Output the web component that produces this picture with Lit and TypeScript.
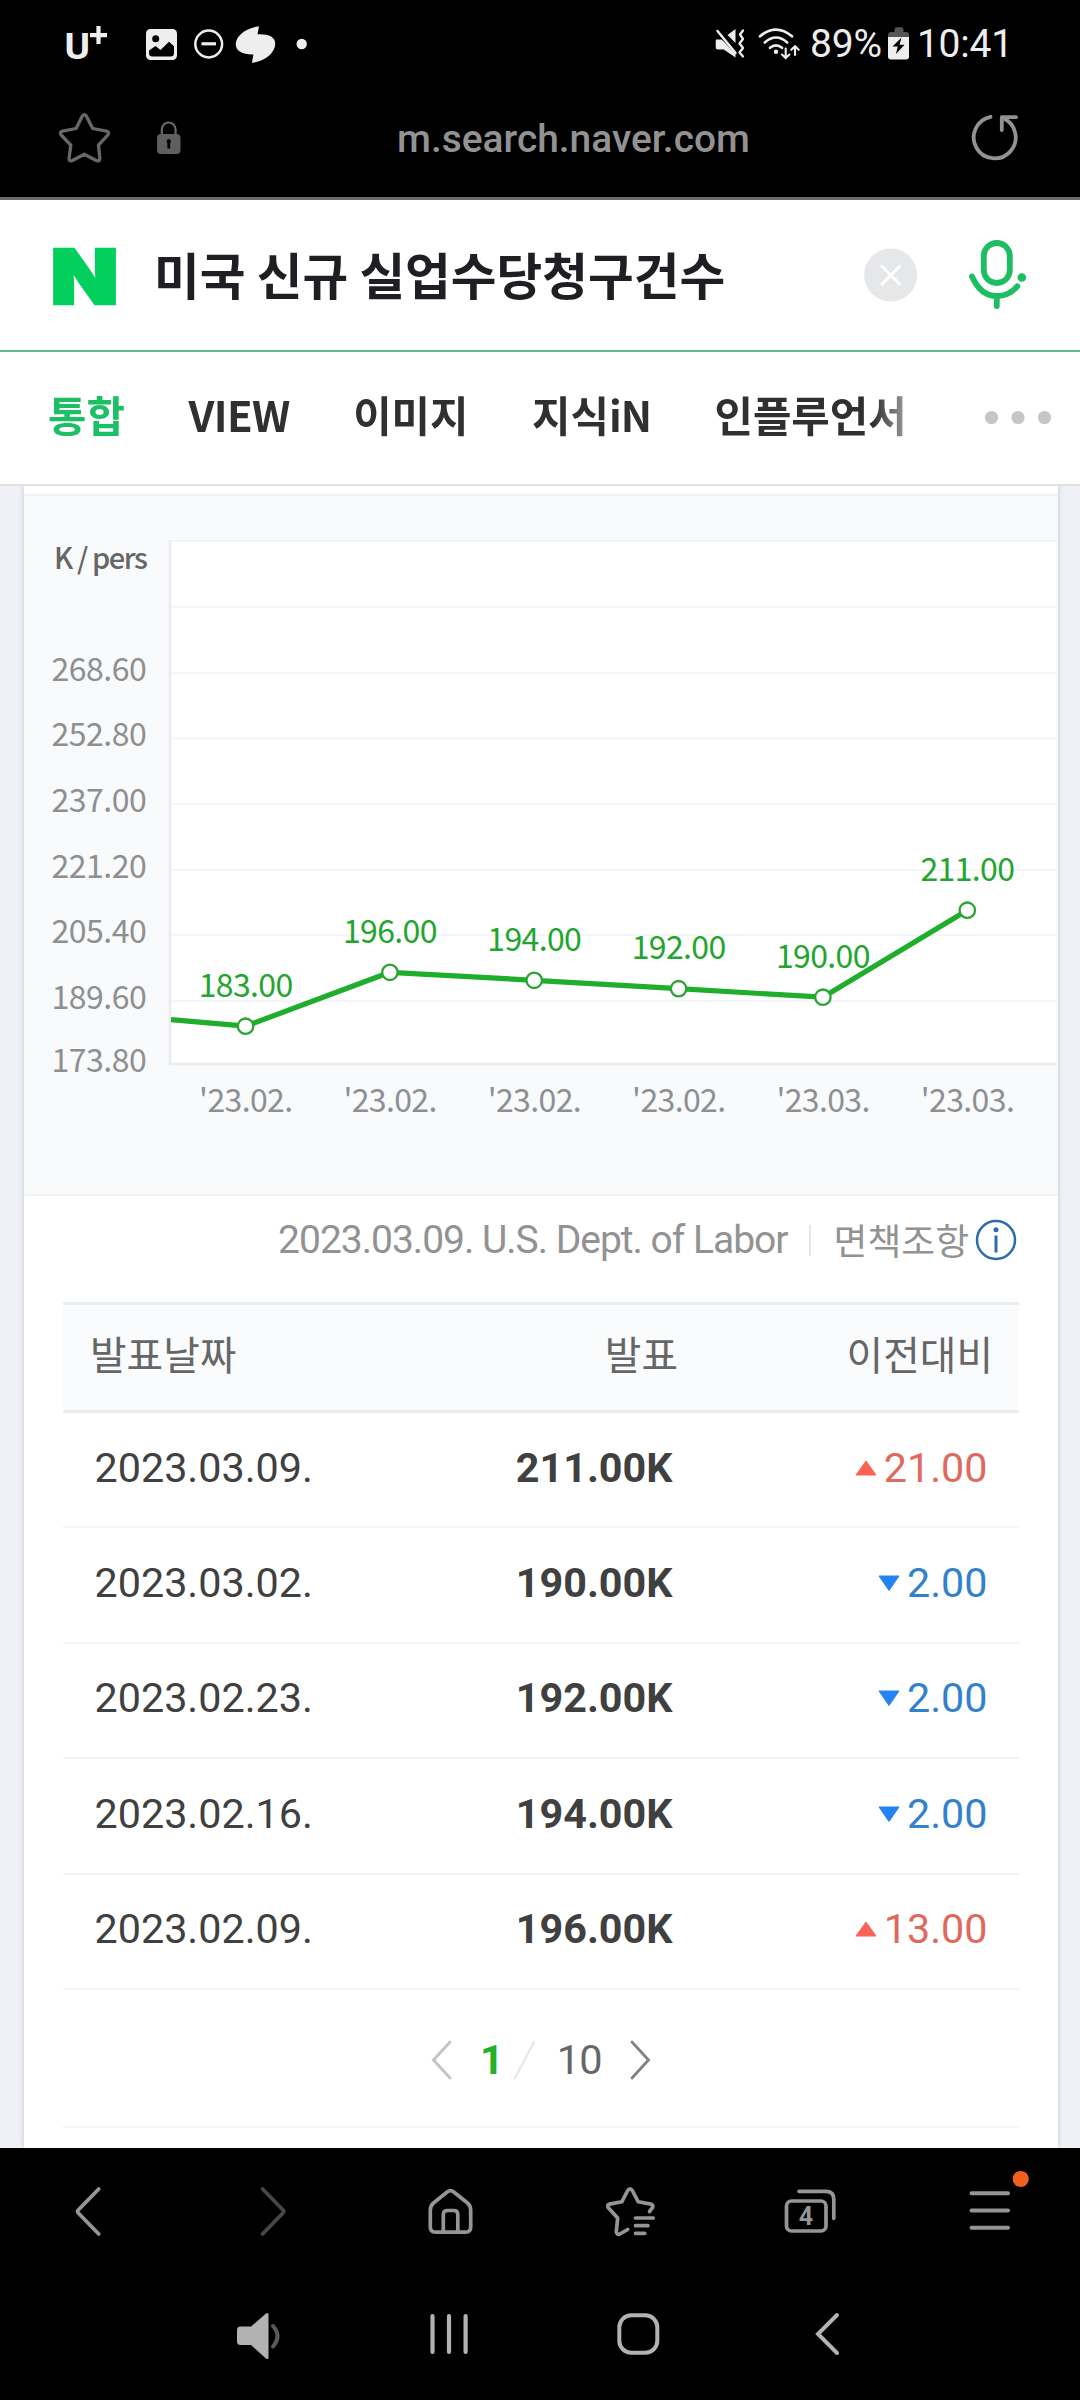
import { LitElement, html, svg, css } from "lit";
import { customElement } from "lit/decorators.js";

@customElement("status-bar")
class StatusBar extends LitElement {
  static styles = css`
    :host { display: flex; align-items: center; height: 88px; background: #000; color: #eee; font: 39px/46px Roboto, sans-serif; }
    svg { display: block; flex: none; }
    .carrier { margin-left: 62px; }
    .picture { margin-left: 26px; }
    .dnd { margin-left: 6px; }
    .app { margin-left: 2px; }
    .more { margin-left: 12px; }
    .right { margin-left: auto; display: flex; align-items: center; padding-right: 67px; white-space: nowrap; }
    .wifi { margin-left: 6px; }
    .percent { width: 84px; padding-left: 8px; letter-spacing: -0.2px; box-sizing: border-box; }
    .clock { width: 101px; letter-spacing: -0.2px; text-align: right; }
  `;
  render() {
    return html`
      <svg class="carrier" width="52" height="64" viewBox="62 12 52 64" fill="#eee" font-family="Roboto, sans-serif">
        <text x="64.5" y="59" font-size="37.5" font-weight="700" textLength="25.5" lengthAdjust="spacingAndGlyphs">U</text>
        <path d="M98.5 26v18M90 35.2h17" stroke="#eee" stroke-width="4.2" />
      </svg>
      <svg class="picture" width="42" height="44" viewBox="140 22 42 44">
        <rect x="146" y="29" width="31" height="31" rx="4.5" fill="#eee" />
        <circle cx="155.7" cy="38.7" r="3.5" />
        <path d="M149 50.500l6.500-4.500 5 4L169 41.800l5 4.400V53a3.500 3.500 0 0 1-3.500 3.500h-18A3.500 3.500 0 0 1 149 53z" />
      </svg>
      <svg class="dnd" width="42" height="44" viewBox="188 22 42 44" fill="none" stroke="#eee">
        <circle cx="208.700" cy="44" r="13.400" stroke-width="2.500" />
        <path d="M201.500 43.800h14.500" stroke-width="3.200" />
      </svg>
      <svg class="app" width="48" height="44" viewBox="232 22 48 44" fill="#eee">
        <path d="M259 26.200C246 28 235.800 35.500 235.800 44.500c0 6.500 7 10.200 17.600 9.900l-1.500 8.500C264.500 61 275.200 53.500 275.200 43.500c0-6.500-6.500-9.700-17.700-9.200z" />
      </svg>
      <svg class="more" width="20" height="44" viewBox="292 22 20 44"><circle cx="301.700" cy="44" r="5.200" fill="#eee" /></svg>
      <div class="right">
        <svg width="36" height="44" viewBox="712 22 36 44" fill="#eee">
          <path d="M716 39.500h5.500l14 11.500v6.500L723.800 49.500H718a2.300 2.300 0 0 1-2.300-2.300v-5.500zM727.500 35l8-6v14z" />
          <path d="M717.500 31l18.500 20" stroke="#000" stroke-width="5" />
          <path d="M717.500 31l18 22" stroke="#eee" stroke-width="2.500" stroke-linecap="round" />
          <path d="M743 30.500l-3 4 3 4.500-3.500 4.500 3.500 4.500-3.500 4.500 3.500 4" fill="none" stroke="#eee" stroke-width="2.300" stroke-linecap="round" stroke-linejoin="round" />
        </svg>
        <svg class="wifi" width="48" height="44" viewBox="754 22 48 44" fill="none" stroke="#eee" stroke-width="2.600" stroke-linecap="round">
          <path d="M760 36.300q16-13.500 32 0M764.800 42.500q11.200-10 22.400 0M770 47.800q6-5 12 0" />
          <circle cx="776" cy="51.800" r="2.200" fill="#eee" stroke="none" />
          <path d="M785.700 48.500v9M782 54.500l3.700 3.500 3.700-3.500M795 55V46.500M791.300 49.800l3.700-3.500 3.700 3.500" stroke-width="2.100" />
        </svg>
        <span class="percent">89%</span>
        <svg width="26" height="44" viewBox="886 22 26 44">
          <path d="M888 37v-2a3 3 0 0 1 3-3h3.500v-2.500q0-2.300 2.300-2.300h4.400q2.300 0 2.300 2.300V32h2.500a3 3 0 0 1 3 3v2z" fill="#555" />
          <path d="M888 37h21v19.500a3 3 0 0 1-3 3h-15a3 3 0 0 1-3-3z" fill="#eee" />
          <path d="M901.500 37.500l-9 9h5.200L896 54l8.500-9.300h-5z" />
        </svg>
        <span class="clock">10:41</span>
      </div>
    `;
  }
}

@customElement("address-bar")
class AddressBar extends LitElement {
  static styles = css`
    :host { display: flex; align-items: center; height: 109px; padding-bottom: 9px; box-sizing: border-box; background: #000; }
    svg { display: block; flex: none; }
    .star { margin-left: 56px; }
    .lock { margin-left: 40px; }
    .url { margin-left: 211px; width: 360px; padding-top: 2px; color: #929292; font: 500 38.900px/56px Roboto, sans-serif; white-space: nowrap; }
    .reload { margin-left: auto; margin-right: 56px; }
  `;
  render() {
    return html`
      <svg class="star" width="56" height="56" viewBox="56 110 56 56" fill="none" stroke="#686868" stroke-width="3.300" stroke-linejoin="round">
        <path d="M82.200 116.200q2.200-3 4.200 0l6.300 12.300 13.800 2.600q3.400.9 1.300 3.900l-9.300 10.200 1.300 13q0 3.600-3.600 2.300l-11.900-6.300-11.900 6.300q-3.400 1.300-3.300-2.300l1.700-13-9.600-10.200q-2.300-3 1.300-3.900l13.600-2.600z" />
      </svg>
      <svg class="lock" width="34" height="56" viewBox="152 110 34 56">
        <path d="M161.800 136v-6.500a6.900 7 0 0 1 13.800 0V136" fill="none" stroke="#686868" stroke-width="2.200" />
        <rect x="157" y="134" width="23.500" height="20" rx="4" fill="#5f5f5f" />
        <path d="M168.800 139a2.200 2.400 0 0 1 1.400 4.200v5.200h-2.800v-5.200a2.200 2.400 0 0 1 1.400-4.200z" />
      </svg>
      <span class="url">m.search.naver.com</span>
      <svg class="reload" width="56" height="56" viewBox="968 110 56 56" fill="none" stroke="#929292" stroke-width="3.800" stroke-linecap="round" stroke-linejoin="round">
        <path d="M990.500 116.800a21 21 0 1 0 13 1.500" />
        <path d="M1001.800 130v-12.800h14.200" />
      </svg>
    `;
  }
}

@customElement("search-header")
class SearchHeader extends LitElement {
  static styles = css`
    :host { display: block; background: #fff; border-top: 3px solid #6b6b6b; border-bottom: 2px solid #e1e2e3; font-family: "Noto Sans CJK KR", sans-serif; }
    svg { display: block; flex: none; }
    .search { display: flex; align-items: center; height: 150px; border-bottom: 2px solid #5fbb8e; }
    .logo { margin-left: 44px; }
    .query { margin-left: 30px; width: 600px; padding-bottom: 4px; color: #1e1e23; font-size: 49.700px; line-height: 72px; font-weight: 700; white-space: nowrap; }
    .clear { margin-left: 107px; }
    .mic { margin-left: 41px; }
    .tabs { display: flex; align-items: center; height: 132px; }
    .list { display: flex; gap: 63.500px; margin-left: 48px; width: 864px; padding-bottom: 9px; color: #303030; font-size: 41.800px; line-height: 62px; font-weight: 700; white-space: nowrap;
      mask-image: linear-gradient(90deg, #000 825px, rgba(0,0,0,.45) 860px); }
    .tab { flex: none; }
    .on { color: #1bc065; }
    .view { letter-spacing: -0.6px; }
    .latin { letter-spacing: -1px; }
    .more { margin-left: 68px; }
  `;
  render() {
    return html`
      <div class="search">
        <svg class="logo" width="80" height="110" viewBox="44 220 80 110">
          <text x="50.500" y="304" font-family="Inter, sans-serif" font-weight="900" font-size="76" textLength="68" lengthAdjust="spacingAndGlyphs" fill="#03cf5d" stroke="#03cf5d" stroke-width="2.600">N</text>
        </svg>
        <span class="query">미국 신규 실업수당청구건수</span>
        <svg class="clear" width="60" height="60" viewBox="861 245 60 60">
          <circle cx="890.600" cy="275" r="26.500" fill="#e6e7e9" />
          <path d="M882 266.500l17.500 17.500M899.500 266.500L882 284" stroke="#fff" stroke-width="3" stroke-linecap="round" />
        </svg>
        <svg class="mic" width="70" height="80" viewBox="962 235 70 80" fill="none" stroke="#1dbe61" stroke-width="5.800" stroke-linecap="round">
          <rect x="983.800" y="243" width="26" height="40" rx="13" />
          <path d="M972 276.500C978 290 986.500 296 996.800 296c8 0 15-3 20.500-9.800M996.800 297v9" />
          <circle cx="1021.800" cy="277.500" r="4.300" fill="#1dbe61" stroke="none" />
        </svg>
      </div>
      <div class="tabs">
        <div class="list">
          <span class="tab on">통합</span><span class="tab view">VIEW</span><span class="tab">이미지</span><span class="tab">지식<span class="latin">iN</span></span><span class="tab">인플루언서</span>
        </div>
        <svg class="more" width="76" height="20" viewBox="980 407 76 20" fill="#c5c6ca">
          <circle cx="991.500" cy="416.500" r="6.600" /><circle cx="1018" cy="416.500" r="6.600" /><circle cx="1044.500" cy="416.500" r="6.600" />
        </svg>
      </div>
    `;
  }
}

interface Point { x: number; y: number; label: string; date: string; }

@customElement("claims-chart")
class ClaimsChart extends LitElement {
  static styles = css`
    :host { display: block; background: #f9fafc; border-top: 2px solid #f1f2f4; border-bottom: 2px solid #f1f2f4; }
    svg { display: block; }
    .t { font-family: "Noto Sans CJK KR", sans-serif; font-size: 32px; }
    .axis { fill: #8e8f90; }
    .unit { fill: #666; font-size: 29px; font-weight: 500; }
    .value { fill: #22a52e; }
  `;
  private points: Point[] = [
    { x: 245.600, y: 1026.200, label: "183.00", date: "'23.02." },
    { x: 389.900, y: 972.300, label: "196.00", date: "'23.02." },
    { x: 534.200, y: 980.300, label: "194.00", date: "'23.02." },
    { x: 678.600, y: 988.700, label: "192.00", date: "'23.02." },
    { x: 822.900, y: 997.200, label: "190.00", date: "'23.03." },
    { x: 967.300, y: 910.200, label: "211.00", date: "'23.03." },
  ];
  private ticks: [string, number][] = [
    ["268.60", 680.500], ["252.80", 746], ["237.00", 812], ["221.20", 877.500], ["205.40", 943], ["189.60", 1009], ["173.80", 1071.500],
  ];
  private grid = [607, 673, 738.500, 804, 870, 935, 1001];
  render() {
    const line = [`171,1019.7`, ...this.points.map((p) => `${p.x},${p.y}`)].join(" ");
    return html`
      <svg width="1034" height="698" viewBox="24 496 1034 698">
        <rect x="171" y="542" width="885" height="521" fill="#fff" />
        <path d="M169 541h887" stroke="#f3f5f6" stroke-width="2" />
        ${this.grid.map((y) => svg`<path d="M171 ${y}h885" stroke="#f4f5f6" stroke-width="2" />`)}
        <path d="M170 540v524" stroke="#eceef1" stroke-width="3" />
        <path d="M169 1064h887" stroke="#e9ecef" stroke-width="2.500" />
        <text class="t unit" x="54" y="568.500" textLength="94">K / pers</text>
        ${this.ticks.map(([t, y]) => svg`<text class="t axis" x="51.500" y="${y}" textLength="95.300">${t}</text>`)}
        <polyline points="${line}" fill="none" stroke="#1fae2b" stroke-width="5.200" stroke-linejoin="round" />
        ${this.points.map((p) => svg`
          <circle cx="${p.x}" cy="${p.y}" r="7.700" fill="#fff" stroke="#2ba336" stroke-width="2.300" />
          <text class="t value" x="${p.x - 46.900}" y="${p.y - 29.500}" textLength="94.500">${p.label}</text>
          <text class="t axis" x="${p.x - 46.500}" y="1112" textLength="94">${p.date}</text>`)}
      </svg>
    `;
  }
}

interface Row { date: string; value: string; diff: string; up: boolean; }

@customElement("claims-table")
class ClaimsTable extends LitElement {
  static styles = css`
    :host { display: block; padding: 0 39px; font-family: Roboto, sans-serif; }
    svg { display: block; flex: none; }
    .meta { display: flex; align-items: center; justify-content: flex-end; height: 106px; padding-bottom: 18px; box-sizing: border-box; color: #929292; font-size: 39px; line-height: 46px; white-space: nowrap; }
    .src { letter-spacing: -1px; }
    .bar { width: 2px; height: 31px; margin: 0 23px 0 21px; background: #e6e6e6; }
    .ko { font-family: "Noto Sans CJK KR", sans-serif; font-size: 36.800px; line-height: 54px; padding-bottom: 3px; }
    .info { margin-left: 4px; }
    .row { display: grid; grid-template-columns: 380px 235px 1fr; align-items: center; height: 115.400px; box-sizing: border-box; border-bottom: 2px solid #f3f4f5; padding-bottom: 4px; font-size: 41.300px; line-height: 50px; color: #404040; }
    .head { height: 111px; border-top: 3px solid #eaedf0; border-bottom: 3px solid #eaedf0; background: #fafbfd; padding-bottom: 9px; font-family: "Noto Sans CJK KR", sans-serif; font-size: 39.800px; line-height: 58px; color: #666; }
    .c1 { padding-left: 31.500px; }
    .c2 { text-align: right; padding-right: 5.500px; font-weight: 700; }
    .c3 { display: flex; align-items: center; justify-content: flex-end; gap: 7px; padding-right: 31.500px; }
    .head .c1 { padding-left: 27px; }
    .head .c2 { padding-right: 0; font-weight: 400; }
    .head .c3 { padding-right: 26px; }
    .up { color: #e0695d; }
    .down { color: #3381cc; }
    .pager { display: flex; align-items: center; height: 138px; padding-top: 4px; box-sizing: border-box; border-bottom: 2px solid #f3f4f5; font-size: 41.500px; line-height: 50px; color: #666; }
    .prev { margin-left: 366px; }
    .page { margin-left: 25px; color: #21b02b; font-weight: 700; }
    .slash { margin-left: 8px; }
    .total { margin-left: 19px; letter-spacing: -1px; }
    .next { margin-left: 26px; }
  `;
  private rows: Row[] = [
    { date: "2023.03.09.", value: "211.00K", diff: "21.00", up: true },
    { date: "2023.03.02.", value: "190.00K", diff: "2.00", up: false },
    { date: "2023.02.23.", value: "192.00K", diff: "2.00", up: false },
    { date: "2023.02.16.", value: "194.00K", diff: "2.00", up: false },
    { date: "2023.02.09.", value: "196.00K", diff: "13.00", up: true },
  ];
  render() {
    return html`
      <div class="meta">
        <span class="src">2023.03.09. U.S. Dept. of Labor</span>
        <span class="bar"></span>
        <span class="ko">면책조항</span>
        <svg class="info" width="46" height="46" viewBox="973.600 217 46 46">
          <circle cx="996.600" cy="240" r="19" fill="none" stroke="#2c6cae" stroke-width="2.500" />
          <path d="M996.600 235.500v17" stroke="#2c6cae" stroke-width="3" />
          <circle cx="996.600" cy="229.800" r="2.500" fill="#2c6cae" />
        </svg>
      </div>
      <div class="row head"><span class="c1">발표날짜</span><span class="c2">발표</span><span class="c3">이전대비</span></div>
      ${this.rows.map((r) => html`
        <div class="row">
          <span class="c1">${r.date}</span>
          <span class="c2">${r.value}</span>
          <span class="c3 ${r.up ? "up" : "down"}">
            <svg width="22" height="16" viewBox="0 0 22 16">
              ${r.up
                ? svg`<path d="M1 15L11 1l10 14z" fill="#fb6253" stroke="#fb6253" stroke-linejoin="round" />`
                : svg`<path d="M1 1L11 15.500 21 1z" fill="#2383f2" stroke="#2383f2" stroke-linejoin="round" />`}
            </svg>${r.diff}
          </span>
        </div>`)}
      <div class="pager">
        <svg class="prev" width="26" height="42" viewBox="0 0 26 42" fill="none" stroke="#c4c4c4" stroke-width="3" stroke-linecap="round"><path d="M21 3L4.500 21 21 39" /></svg>
        <span class="page">1</span>
        <svg class="slash" width="26" height="42" viewBox="0 0 26 42" fill="none" stroke="#e9e9e9" stroke-width="2.500" stroke-linecap="round"><path d="M22 3L3 39" /></svg>
        <span class="total">10</span>
        <svg class="next" width="26" height="42" viewBox="0 0 26 42" fill="none" stroke="#828282" stroke-width="2.800" stroke-linecap="round"><path d="M5 3L21.500 21 5 39" /></svg>
      </div>
    `;
  }
}

@customElement("browser-toolbar")
class BrowserToolbar extends LitElement {
  static styles = css`
    :host { display: flex; align-items: center; height: 126px; background: #000; }
    svg { display: block; flex: none; }
    .back { margin-left: 58px; }
    .gap { margin-left: 120px; }
    .gap2 { margin-left: 119px; }
  `;
  render() {
    return html`
      <svg class="back" width="60" height="90" viewBox="58 2166 60 90" fill="none" stroke="#959595" stroke-width="3.800" stroke-linecap="round" stroke-linejoin="round"><path d="M98.700 2189l-20.400 21q-1.300 1.500 0 3l20.400 21" /></svg>
      <svg class="gap2" width="60" height="90" viewBox="237 2166 60 90" fill="none" stroke="#474747" stroke-width="3.800" stroke-linecap="round" stroke-linejoin="round"><path d="M262.600 2189l20.400 21q1.300 1.500 0 3l-20.400 21" /></svg>
      <svg class="gap" width="66" height="90" viewBox="417 2166 66 90" fill="none" stroke="#959595" stroke-width="3.700" stroke-linejoin="round">
        <path d="M447.500 2191.800q3-2.200 6 0l14 11.200q3.200 2.800 3.200 7v17q0 5.200-5.200 5.200h-30q-5.200 0-5.200-5.200v-17q0-4.200 3.200-7z" />
        <path d="M443.300 2231v-16.500q0-4 4-4h6.500q4 0 4 4V2231" />
      </svg>
      <svg class="gap" width="60" height="90" viewBox="603 2166 60 90" fill="none" stroke="#959595" stroke-width="3.700" stroke-linecap="round" stroke-linejoin="round">
        <path d="M649.500 2211.500l3-3.800q1.200-2.800-1.600-3.600l-12.600-2.300-6-11.300q-2.300-3.400-4.600 0l-5.900 11.300-12.300 2.300q-2.800 1-1.200 3.600l9.400 10.300-1.400 13.700q.4 3.500 3.600 2.300l7.800-4.500" />
        <path d="M635.500 2218h17.700M635.500 2225.700h12.300M635.500 2233.300h9.300" />
      </svg>
      <svg class="gap2" width="60" height="90" viewBox="782 2166 60 90" fill="none" stroke="#959595" stroke-width="3.700" stroke-linecap="round">
        <rect x="786.500" y="2201" width="39.500" height="30" rx="5" />
        <path d="M799 2191.300h26.800q8 0 8 8v19" />
        <text x="806" y="2224.800" text-anchor="middle" font-family="Roboto, sans-serif" font-size="25" font-weight="700" fill="#959595" stroke="none">4</text>
      </svg>
      <svg class="gap" width="72" height="90" viewBox="962 2166 72 90" fill="none" stroke="#959595" stroke-width="4" stroke-linecap="round">
        <path d="M971.500 2193.300h36.500M971.500 2210.500h36.500M971.500 2227.700h36.500" />
        <circle cx="1020.700" cy="2179" r="8.100" fill="#f0601a" stroke="none" />
      </svg>
    `;
  }
}

@customElement("system-nav")
class SystemNav extends LitElement {
  static styles = css`
    :host { display: flex; align-items: flex-start; height: 126px; padding-top: 30px; box-sizing: border-box; background: #000; }
    svg { display: block; flex: none; }
    .volume { margin-left: 230px; }
    .recents { margin-left: 138px; }
    .home { margin-left: 136px; }
    .back { margin-left: 138px; }
  `;
  render() {
    return html`
      <svg class="volume" width="56" height="60" viewBox="230 2304 56 60">
        <path d="M240.500 2326.500h10.500l15-13q2.500-1.500 2.500 1v43q0 2.500-2.500 1L251 2345h-10.500q-3.500 0-3.500-3.500V2330q0-3.500 3.500-3.500z" fill="#b2b2b2" />
        <path d="M273 2326q9 10 0 20.500" fill="none" stroke="#5a5a5a" stroke-width="4" stroke-linecap="round" />
      </svg>
      <svg class="recents" width="52" height="60" viewBox="424 2304 52 60" stroke="#b2b2b2" stroke-width="4.200" stroke-linecap="round"><path d="M432.500 2316v36M449 2316v36M465.600 2316v36" /></svg>
      <svg class="home" width="54" height="60" viewBox="612 2304 54 60" fill="none" stroke="#b2b2b2" stroke-width="4"><rect x="619.300" y="2315.300" width="38" height="37.500" rx="12" /></svg>
      <svg class="back" width="42" height="60" viewBox="804 2304 42 60" fill="none" stroke="#b2b2b2" stroke-width="4" stroke-linecap="round"><path d="M837 2315l-19 19 19 19" /></svg>
    `;
  }
}

@customElement("app-root")
class AppRoot extends LitElement {
  static styles = css`
    :host { display: flex; flex-direction: column; width: 1080px; height: 2400px; background: #000; overflow: hidden; }
    .page { flex: 1; min-height: 0; overflow: hidden; background: #eff1f6; padding: 0 22px 0 24px; }
    .card { height: 100%; box-sizing: border-box; padding-top: 8px; background: #fff; box-shadow: 0 0 5px rgba(20, 60, 70, .22); }
  `;
  render() {
    return html`
      <status-bar></status-bar>
      <address-bar></address-bar>
      <search-header></search-header>
      <div class="page">
        <div class="card">
          <claims-chart></claims-chart>
          <claims-table></claims-table>
        </div>
      </div>
      <browser-toolbar></browser-toolbar>
      <system-nav></system-nav>
    `;
  }
}
